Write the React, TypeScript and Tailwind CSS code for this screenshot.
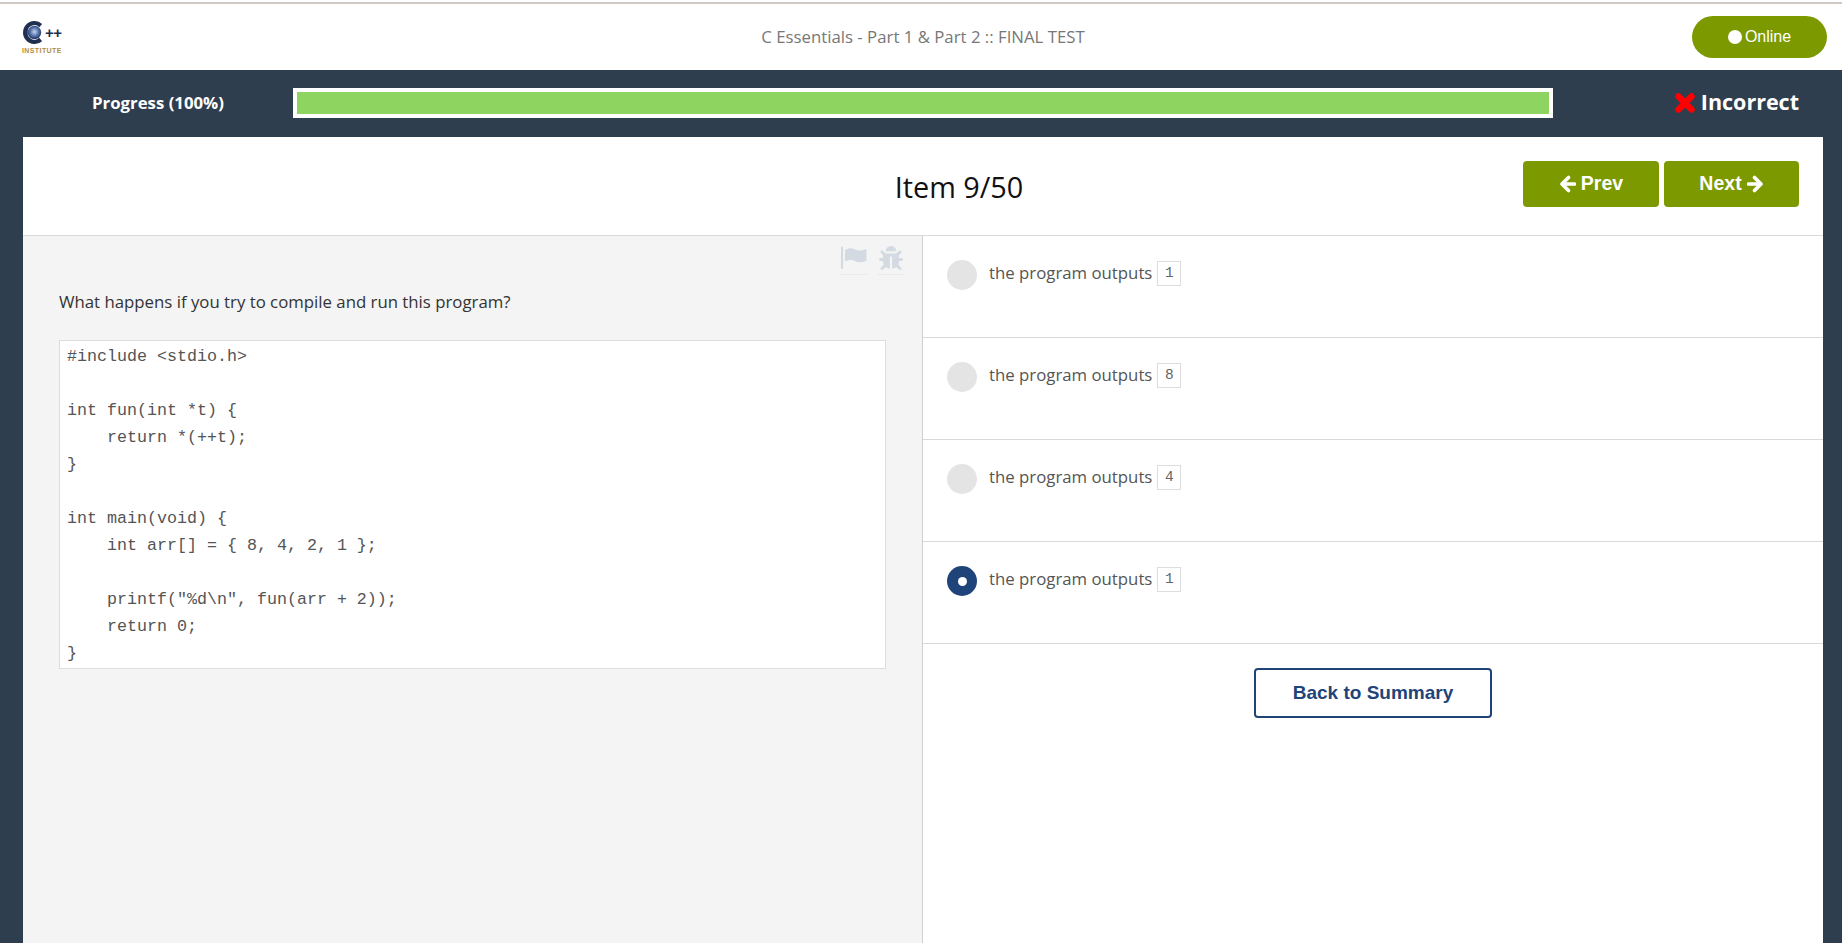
import { FaBug } from 'react-icons/fa';

const CODE = `#include <stdio.h>

int fun(int *t) {
    return *(++t);
}

int main(void) {
    int arr[] = { 8, 4, 2, 1 };

    printf("%d\\n", fun(arr + 2));
    return 0;
}`;

const ANSWERS = [
  { value: '1', selected: false },
  { value: '8', selected: false },
  { value: '4', selected: false },
  { value: '1', selected: true },
];

const Logo = () => (
  <div className="flex w-[41px] flex-col items-start">
    <div className="relative h-[26px] w-[41px]">
      <svg width="23" height="23" viewBox="0 0 24 24" className="absolute left-0 top-0">
        <defs>
          <radialGradient id="globe" cx="50%" cy="45%" r="55%">
            <stop offset="0%" stopColor="#c7d4ea" />
            <stop offset="60%" stopColor="#4f6fa8" />
            <stop offset="100%" stopColor="#1f2f5c" />
          </radialGradient>
        </defs>
        <path d="M21 3A12 12 0 1 0 21 21L18 17.500A7 7 0 0 1 6 12A7 7 0 0 1 18 6.500Z" fill="#1e2f52" />
        <circle cx="13" cy="12" r="7" fill="url(#globe)" />
      </svg>
      <span className="absolute left-[23px] top-[-1px] font-['Liberation_Sans',sans-serif] text-[15px] font-bold leading-[26px] tracking-[-0.5px] text-[#1e2f52]">
        ++
      </span>
    </div>
    <span className="font-['Liberation_Sans',sans-serif] text-[7px] font-bold leading-[8px] tracking-[0.4px] text-[#b08f45]">
      INSTITUTE
    </span>
  </div>
);

const ArrowIcon = ({ flip = false }: { flip?: boolean }) => (
  <svg width="17" height="18" viewBox="0 0 17 18" className={flip ? '-scale-x-100' : ''}>
    <path d="M9.500 2.500L3 9L9.500 15.500M4 9H15.500" fill="none" stroke="currentColor" strokeWidth="3.600" strokeLinecap="round" strokeLinejoin="round" />
  </svg>
);

const CrossIcon = () => (
  <svg width="22" height="22" viewBox="0 0 22 22">
    <path d="M4.500 4.500L17.500 17.500M17.500 4.500L4.500 17.500" fill="none" stroke="#ff0000" strokeWidth="6.500" strokeLinecap="round" />
  </svg>
);

const FlagIcon = () => (
  <svg width="26" height="23" viewBox="0 0 26 23">
    <path d="M1 1.500V22" fill="none" stroke="#d3dae2" strokeWidth="2.200" strokeLinecap="round" />
    <path d="M4 4C8 1.500 11 2 14 3.500C18 5.300 22 4.500 25.500 3V14.500C22 16.500 18 17 14 15C11 13.500 8 13.500 4 15.500Z" fill="#d3dae2" />
  </svg>
);

const AnswerRow = ({ value, selected }: { value: string; selected: boolean }) => (
  <div className="flex h-[102px] items-start border-b border-[#d9d9d9] pl-[24px] pt-[24px]">
    <div className={`flex h-[30px] w-[30px] shrink-0 items-center justify-center rounded-full ${selected ? 'bg-[#1f4479]' : 'bg-[#e4e4e4]'}`}>
      {selected && <div className="h-[9px] w-[9px] rounded-full bg-white" />}
    </div>
    <span className="ml-[12px] mt-[1px] text-[16.8px] leading-[24px] text-[#555]">the program outputs</span>
    <code className="ml-[5px] mt-[1px] flex h-[25px] w-[24px] items-center justify-center border border-[#ddd] bg-white font-['Liberation_Mono',monospace] text-[14.5px] font-normal text-[#666]">
      {value}
    </code>
  </div>
);

export default function App() {
  return (
    <div className="flex h-screen flex-col overflow-hidden bg-[#2f3e4e] font-['Open_Sans',sans-serif]">
      <div className="h-[70px] shrink-0 bg-white pt-[2px]">
        <div className="h-[2px] bg-[#cfcac5]" />
        <div className="relative flex h-[66px] items-center justify-center pl-[4px]">
          <div className="absolute left-[22px] top-[17px]">
            <Logo />
          </div>
          <span className="text-[16.8px] text-[#777]">C Essentials - Part 1 &amp; Part 2 :: FINAL TEST</span>
          <div className="absolute right-[15px] top-[12px] flex h-[42px] w-[135px] items-center justify-center gap-[3px] rounded-full bg-[#7c9a00] font-['Liberation_Sans',sans-serif] text-[16px] text-white">
            <div className="h-[14px] w-[14px] rounded-full bg-white" />
            Online
          </div>
        </div>
      </div>

      <div className="flex h-[67px] shrink-0 items-center pb-[2px] pl-[23px] pr-[43px]">
        <div className="w-[270px] text-center text-[16.8px] font-bold text-white">Progress (100%)</div>
        <div className="h-[30px] w-[1260px] border-4 border-white bg-[#8ed460]" />
        <div className="flex flex-1 items-center justify-end gap-[5px] text-[21.5px] font-bold text-white">
          <CrossIcon />
          Incorrect
        </div>
      </div>

      <div className="ml-[23px] mr-[19px] flex flex-1 flex-col bg-white">
        <div className="relative flex h-[99px] shrink-0 items-center justify-center border-b border-[#d9d9d9] pl-[72px] pt-[2px]">
          <span className="text-[28.8px] leading-[38px] text-[#111]">Item 9/50</span>
          <div className="absolute right-[24px] top-[24px] flex gap-[5px] font-['Liberation_Sans',sans-serif] text-[19.5px] font-bold text-white">
            <button className="flex h-[46px] w-[136px] items-center justify-center gap-[5px] rounded-[4px] bg-[#7c9a00]">
              <ArrowIcon />
              Prev
            </button>
            <button className="flex h-[46px] w-[135px] items-center justify-center gap-[5px] rounded-[4px] bg-[#7c9a00]">
              Next
              <ArrowIcon flip />
            </button>
          </div>
        </div>

        <div className="flex flex-1">
          <div className="w-[900px] shrink-0 border-r border-[#d0d0d0] bg-[#f4f4f4] pl-[36px]">
            <div className="flex justify-end gap-[12px] pr-[19px] pt-[10px]">
              <span className="border-b border-dotted border-[#e2e2e2] pb-[4px]">
                <FlagIcon />
              </span>
              <span className="border-b border-dotted border-[#e2e2e2] pb-[4px]">
                <FaBug className="text-[24px] text-[#d3dae2]" />
              </span>
            </div>
            <p className="mt-[15px] text-[16.8px] leading-[24px] text-[#333]">What happens if you try to compile and run this program?</p>
            <pre className="mt-[26px] h-[329px] w-[827px] border border-[#ddd] bg-white py-[1.5px] pl-[7px] font-['Liberation_Mono',monospace] text-[16.67px] leading-[27px] text-[#555]">
              {CODE}
            </pre>
          </div>

          <div className="flex-1">
            {ANSWERS.map((a, i) => (
              <AnswerRow key={i} value={a.value} selected={a.selected} />
            ))}
            <div className="flex justify-center pt-[24px]">
              <button className="h-[50px] w-[238px] rounded-[4px] border-2 border-[#1f4479] bg-white font-['Liberation_Sans',sans-serif] text-[19px] font-bold text-[#1f4479]">
                Back to Summary
              </button>
            </div>
          </div>
        </div>
      </div>
    </div>
  );
}
